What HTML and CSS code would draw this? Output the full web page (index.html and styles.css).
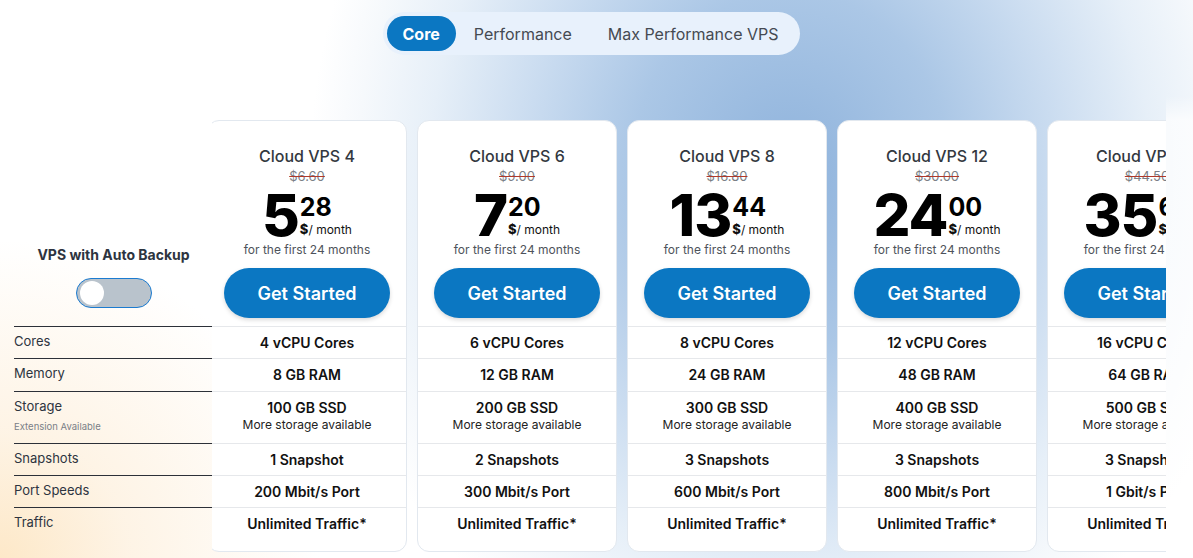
FILE: index.html
```html
<!DOCTYPE html>
<html lang="en">
<head>
<meta charset="utf-8">
<title>Cloud VPS pricing</title>
<link rel="stylesheet" href="styles.css">
</head>
<body>
<div class="tabs-wrap">
  <nav class="tabs">
    <span class="tab active">Core</span>
    <span class="tab">Performance</span>
    <span class="tab">Max Performance VPS</span>
  </nav>
</div>
<main class="pricing">
  <aside class="labels">
    <div class="labels-head">
      <div class="backup-title">VPS with Auto Backup</div>
      <div class="toggle"><span class="knob"></span></div>
    </div>
    <div class="lrow r-cores">Cores</div>
    <div class="lrow r-mem">Memory</div>
    <div class="lrow r-storage">Storage<span class="ext">Extension Available</span></div>
    <div class="lrow r-snap">Snapshots</div>
    <div class="lrow r-port">Port Speeds</div>
    <div class="lrow r-traffic">Traffic</div>
  </aside>
  <div class="carousel">
    <div class="track">
      <article class="card">
        <div class="head">
          <div class="name">Cloud VPS 4</div>
          <div class="old">$6.60</div>
          <div class="price"><span class="big">5</span><span class="side"><span class="cents">28</span><span class="per"><b>$</b>/ month</span></span></div>
          <div class="first">for the first 24 months</div>
          <a class="btn">Get Started</a>
        </div>
        <div class="row r-cores">4 vCPU Cores</div>
        <div class="row r-mem">8 GB RAM</div>
        <div class="row r-storage">100 GB SSD<span class="more">More storage available</span></div>
        <div class="row r-snap">1 Snapshot</div>
        <div class="row r-port">200 Mbit/s Port</div>
        <div class="row r-traffic">Unlimited Traffic*</div>
      </article>
      <article class="card">
        <div class="head">
          <div class="name">Cloud VPS 6</div>
          <div class="old">$9.00</div>
          <div class="price"><span class="big">7</span><span class="side"><span class="cents">20</span><span class="per"><b>$</b>/ month</span></span></div>
          <div class="first">for the first 24 months</div>
          <a class="btn">Get Started</a>
        </div>
        <div class="row r-cores">6 vCPU Cores</div>
        <div class="row r-mem">12 GB RAM</div>
        <div class="row r-storage">200 GB SSD<span class="more">More storage available</span></div>
        <div class="row r-snap">2 Snapshots</div>
        <div class="row r-port">300 Mbit/s Port</div>
        <div class="row r-traffic">Unlimited Traffic*</div>
      </article>
      <article class="card">
        <div class="head">
          <div class="name">Cloud VPS 8</div>
          <div class="old">$16.80</div>
          <div class="price"><span class="big">13</span><span class="side"><span class="cents">44</span><span class="per"><b>$</b>/ month</span></span></div>
          <div class="first">for the first 24 months</div>
          <a class="btn">Get Started</a>
        </div>
        <div class="row r-cores">8 vCPU Cores</div>
        <div class="row r-mem">24 GB RAM</div>
        <div class="row r-storage">300 GB SSD<span class="more">More storage available</span></div>
        <div class="row r-snap">3 Snapshots</div>
        <div class="row r-port">600 Mbit/s Port</div>
        <div class="row r-traffic">Unlimited Traffic*</div>
      </article>
      <article class="card">
        <div class="head">
          <div class="name">Cloud VPS 12</div>
          <div class="old">$30.00</div>
          <div class="price"><span class="big">24</span><span class="side"><span class="cents">00</span><span class="per"><b>$</b>/ month</span></span></div>
          <div class="first">for the first 24 months</div>
          <a class="btn">Get Started</a>
        </div>
        <div class="row r-cores">12 vCPU Cores</div>
        <div class="row r-mem">48 GB RAM</div>
        <div class="row r-storage">400 GB SSD<span class="more">More storage available</span></div>
        <div class="row r-snap">3 Snapshots</div>
        <div class="row r-port">800 Mbit/s Port</div>
        <div class="row r-traffic">Unlimited Traffic*</div>
      </article>
      <article class="card">
        <div class="head">
          <div class="name">Cloud VPS 16</div>
          <div class="old">$44.50</div>
          <div class="price"><span class="big">35</span><span class="side"><span class="cents">60</span><span class="per"><b>$</b>/ month</span></span></div>
          <div class="first">for the first 24 months</div>
          <a class="btn">Get Started</a>
        </div>
        <div class="row r-cores">16 vCPU Cores</div>
        <div class="row r-mem">64 GB RAM</div>
        <div class="row r-storage">500 GB SSD<span class="more">More storage available</span></div>
        <div class="row r-snap">3 Snapshots</div>
        <div class="row r-port">1 Gbit/s Port</div>
        <div class="row r-traffic">Unlimited Traffic*</div>
      </article>
    </div>
  </div>
  <div class="fade"></div>
</main>
</body>
</html>
```
FILE: styles.css
```css
* { box-sizing: border-box; }
html, body { height: 100%; }
body {
  margin: 0;
  overflow: hidden;
  font-family: Inter, "Noto Sans", "Liberation Sans", sans-serif;
  color: #2d3440;
  background:
    radial-gradient(circle 320px at 0 560px, rgba(253, 232, 200, 1) 0%, rgba(253, 236, 212, 0.6) 40%, rgba(255, 255, 255, 0) 100%),
    radial-gradient(ellipse 480px 540px at 790px 170px, #8fb3dc 0%, #abc7e6 33%, #cadcf0 55%, #e6eff8 75%, #f6f9fc 90%, rgba(255, 255, 255, 0) 100%),
    #ffffff;
}

.tabs-wrap {
  display: flex;
  justify-content: center;
  padding: 12px 10px 0 0;
}
.tabs {
  display: flex;
  align-items: center;
  height: 43px;
  padding: 4px;
  border-radius: 22px;
  background: #e8f1fc;
}
.tab {
  display: flex;
  align-items: center;
  height: 35px;
  padding: 0 18px;
  border-radius: 18px;
  font-size: 16px;
  color: #454a52;
}
.tab.active {
  padding: 0 16px;
  background: #0b77c2;
  color: #fff;
  font-weight: 700;
}

.pricing {
  display: flex;
  margin-top: 41px;
  padding-left: 14px;
  height: 462px;
}

.labels {
  width: 198px;
  flex-shrink: 0;
  padding-top: 24px;
}
.labels-head {
  height: 206px;
  display: flex;
  flex-direction: column;
  justify-content: flex-end;
  align-items: center;
  padding-bottom: 18px;
  padding-left: 1px;
}
.backup-title {
  font-size: 14px;
  font-weight: 700;
  line-height: 20px;
  color: #2d3440;
  margin-bottom: 13px;
}
.toggle {
  width: 76px;
  height: 30px;
  border-radius: 15px;
  background: #b9c3cc;
  border: 1.5px solid #1b7bd0;
  padding: 2px 3px;
  display: flex;
  align-items: center;
}
.knob {
  width: 24px;
  height: 24px;
  border-radius: 50%;
  background: #fff;
}
.lrow {
  border-top: 1px solid #2c3038;
  padding-top: 6px;
  font-size: 13px;
  line-height: 16px;
  color: #2d3440;
}
.lrow .ext {
  display: block;
  margin-top: 7px;
  font-size: 9.5px;
  line-height: 12px;
  color: #7a7f87;
}

.r-cores { height: 32px; }
.r-mem { height: 33px; }
.r-storage { height: 52px; }
.r-snap { height: 32px; }
.r-port { height: 32px; }
.r-traffic { height: 32px; }

.carousel {
  width: 954px;
  flex-shrink: 0;
  overflow: hidden;
  padding-top: 24px;
}
.track {
  display: flex;
  gap: 10px;
  margin-left: -5px;
}
.card {
  width: 200px;
  height: 432px;
  flex-shrink: 0;
  background: #fff;
  border: 1px solid #e2e8ef;
  border-radius: 12px;
  overflow: hidden;
}
.head {
  height: 205px;
  padding-top: 25px;
  display: flex;
  flex-direction: column;
  align-items: center;
}
.name {
  font-size: 16px;
  font-weight: 500;
  line-height: 20px;
  color: #333840;
}
.old {
  margin-top: 1px;
  font-size: 13px;
  line-height: 18px;
  color: #7b7f86;
  text-decoration: line-through;
  text-decoration-color: #b0392b;
}
.price {
  margin-top: 3px;
  height: 54px;
  display: flex;
  justify-content: center;
}
.big {
  font-size: 58px;
  font-weight: 800;
  line-height: 54px;
  color: #000;
  letter-spacing: -1px;
}
.side {
  display: flex;
  flex-direction: column;
  margin-top: 7px;
  margin-left: 1px;
}
.cents {
  font-size: 25px;
  font-weight: 700;
  line-height: 25px;
  color: #000;
}
.per {
  margin-top: 2px;
  font-size: 12px;
  line-height: 14px;
  color: #111;
}
.per b { font-weight: 800; font-size: 13px; }
.first {
  margin-top: 0;
  font-size: 12px;
  line-height: 16px;
  color: #4e535b;
}
.btn {
  margin-top: 10px;
  width: 166px;
  height: 50px;
  border-radius: 25px;
  background: #0b77c2;
  color: #fff;
  font-size: 18px;
  font-weight: 600;
  display: flex;
  align-items: center;
  justify-content: center;
  box-shadow: 0 2px 4px rgba(0, 0, 0, 0.15);
}
.row {
  border-top: 1px solid #e6e8eb;
  display: flex;
  flex-direction: column;
  align-items: center;
  justify-content: center;
  font-size: 14px;
  font-weight: 600;
  line-height: 18px;
  color: #111;
}
.row.r-storage {
  justify-content: flex-start;
  padding-top: 7px;
}
.row .more {
  font-size: 12px;
  font-weight: 400;
  line-height: 16px;
  color: #222;
}

.fade {
  flex: 1;
  background: linear-gradient(to bottom, rgba(255, 255, 255, 0) 0, rgba(255, 255, 255, 0.72) 24px);
}
```
